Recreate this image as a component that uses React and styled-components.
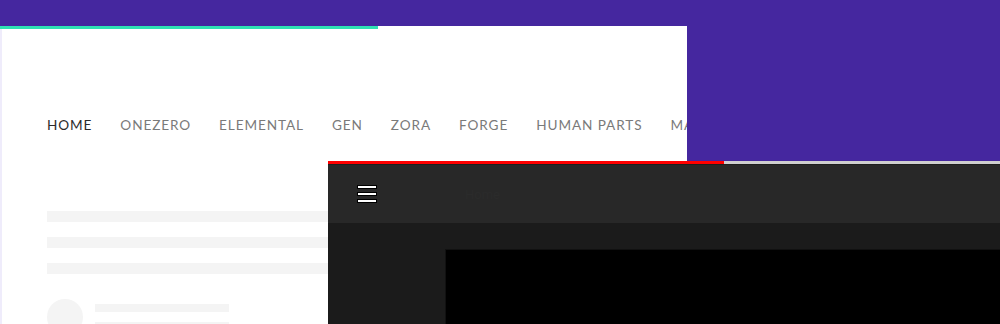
import React from 'react'
import styled, { createGlobalStyle } from 'styled-components'

const GlobalStyle = createGlobalStyle`
  html, body {
    margin: 0;
    padding: 0;
    background: #45279f;
  }
  #root {
    width: 1000px;
    height: 324px;
  }
`

const navItems = ['Home', 'OneZero', 'Elemental', 'GEN', 'Zora', 'Forge', 'Human Parts', 'Marker']

export default function App() {
  return (
    <>
      <GlobalStyle />
      <Desktop>
        <ArticleWindow>
          <Progress $width={378} $color="#2fe2b4" $rest="transparent" />
          <Nav>
            {navItems.map((item, i) => (
              <NavLink key={item} $active={i === 0}>{item}</NavLink>
            ))}
          </Nav>
          <Skeleton>
            <SkeletonLine />
            <SkeletonLine />
            <SkeletonLine />
            <Author>
              <Avatar />
              <AuthorLines>
                <SmallLine />
                <SmallLine />
              </AuthorLines>
            </Author>
          </Skeleton>
        </ArticleWindow>

        <PlayerWindow>
          <Progress $width={396} $color="#f00" $rest="#cfcfcf" />
          <PlayerHeader>
            <Burger>
              <span />
              <span />
              <span />
            </Burger>
            <Faint>Home</Faint>
          </PlayerHeader>
          <PlayerBody>
            <Video />
          </PlayerBody>
        </PlayerWindow>
      </Desktop>
    </>
  )
}

const Desktop = styled.div`
  position: relative;
  width: 1000px;
  height: 324px;
  overflow: hidden;
  background: #45279f;
`

const ArticleWindow = styled.div`
  position: absolute;
  left: 0;
  top: 26px;
  width: 687px;
  height: 298px;
  background: #fff;
  box-shadow: inset 2px 0 0 #efecfb;
  overflow: hidden;
`

const Progress = styled.div`
  height: 3px;
  flex-shrink: 0;
  background: linear-gradient(
    to right,
    ${p => p.$color} 0,
    ${p => p.$color} ${p => p.$width}px,
    ${p => p.$rest} ${p => p.$width}px
  );
`

const Nav = styled.nav`
  display: flex;
  gap: 28px;
  padding: 87px 0 0 47px;
  white-space: nowrap;
`

const NavLink = styled.a`
  font-family: Lato, 'Open Sans', sans-serif;
  font-size: 13.6px;
  letter-spacing: 0.9px;
  text-transform: uppercase;
  line-height: 18px;
  color: ${p => (p.$active ? '#2b2b2b' : '#7a7a7a')};
`

const Skeleton = styled.div`
  display: flex;
  flex-direction: column;
  padding: 77px 0 0 47px;
`

const SkeletonLine = styled.div`
  width: 600px;
  height: 11px;
  background: #f4f4f4;
  margin-bottom: 15px;
`

const Author = styled.div`
  display: flex;
  gap: 12px;
  margin-top: 10px;
`

const Avatar = styled.div`
  width: 36px;
  height: 36px;
  border-radius: 50%;
  background: #f4f4f4;
`

const AuthorLines = styled.div`
  display: flex;
  flex-direction: column;
  gap: 10px;
  padding-top: 5px;
`

const SmallLine = styled.div`
  width: 134px;
  height: 8px;
  background: #f4f4f4;
`

const PlayerWindow = styled.div`
  position: absolute;
  left: 328px;
  top: 161px;
  width: 672px;
  height: 163px;
  background: #1b1b1b;
  display: flex;
  flex-direction: column;
`

const PlayerHeader = styled.div`
  height: 58px;
  flex-shrink: 0;
  background: #282828;
  display: flex;
  align-items: center;
  padding-left: 29px;
  gap: 88px;
  border-top: 1px solid #1e1e1e;
`

const Burger = styled.div`
  display: flex;
  flex-direction: column;
  gap: 3px;
  width: 20px;
  span {
    height: 2px;
    background: #fff;
    border: 0.5px solid #000;
  }
`

const Faint = styled.span`
  font-family: Roboto, sans-serif;
  font-size: 13px;
  color: #2b2b2b;
`

const PlayerBody = styled.div`
  flex: 1;
  padding: 26px 0 0 117px;
`

const Video = styled.div`
  height: 100%;
  background: #000;
  border-left: 1px solid #111;
  border-top: 1px solid #111;
`
